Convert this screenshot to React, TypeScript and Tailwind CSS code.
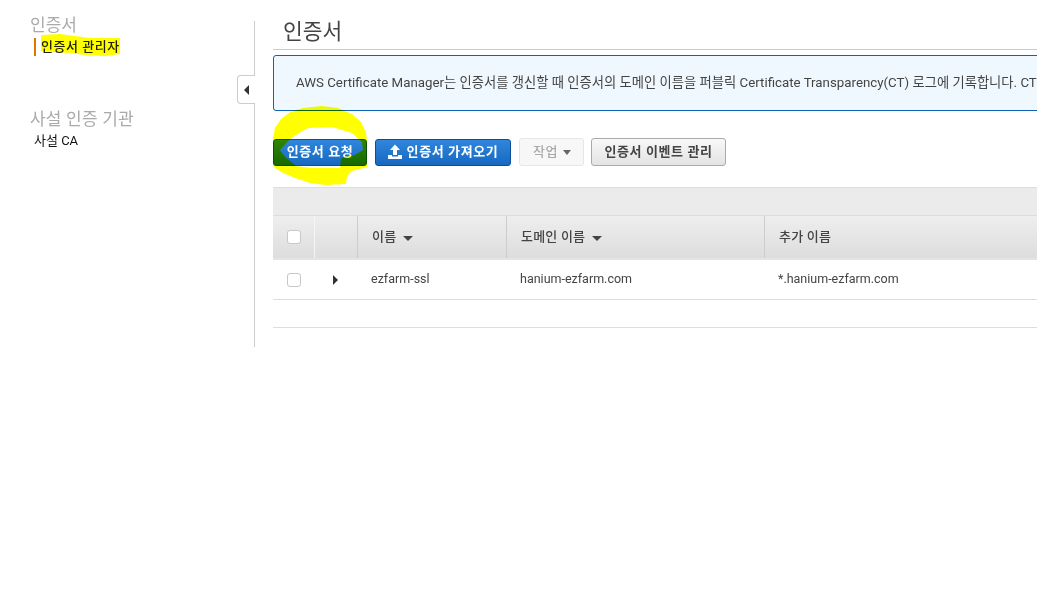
const font = 'font-["Roboto","Noto_Sans_CJK_KR",sans-serif]';

function Caret({ className }: { className: string }) {
  return <span className={`inline-block border-x-[4px] border-t-[5px] border-x-transparent ${className}`} />;
}

function Checkbox() {
  return <span className="block h-[14px] w-[14px] rounded-[3px] border border-[#c8c8c8] bg-white" />;
}

function UploadIcon() {
  return (
    <svg width="14" height="16" viewBox="0 0 14 16" fill="#fff">
      <path d="M7 0.5 12 6H9v5H5V6H2z" />
      <path d="M0 11h4v1.5h6V11h4v4H0z" />
    </svg>
  );
}

function HeaderCell({ label, width, sort }: { label: string; width: string; sort?: boolean }) {
  return (
    <div className={`flex items-center gap-[7px] border-r border-r-[#ccc] pl-[14px] text-[13px] font-medium tracking-[0.2px] text-[#444] ${width}`}>
      {label}
      {sort && <Caret className="mt-[3px] border-t-[#444] border-x-[5px]" />}
    </div>
  );
}

export default function App() {
  return (
    <div className={`relative flex h-[599px] w-[1037px] overflow-hidden bg-white ${font}`}>
      {/* left nav */}
      <nav className="w-[254px] shrink-0 pl-[30px] pt-[15px]">
        <h3 className="text-[17px] leading-[21px] text-[#aaa]">인증서</h3>
        <div className="ml-[4px] mt-[2px] flex h-[18px] items-center border-l-2 border-l-[#dd7700] pl-[5px] text-[13px] font-medium tracking-[0.55px] text-[#222]">
          인증서 관리자
        </div>
        <h3 className="mt-[53px] text-[17px] leading-[21px] tracking-[0.2px] text-[#aaa]">사설 인증 기관</h3>
        <div className="ml-[4px] mt-[2px] text-[13px] leading-[18px] text-[#111]">사설 CA</div>
      </nav>

      {/* divider + collapse toggle */}
      <div className="relative mt-[21px] h-[326px] w-px shrink-0 bg-[#ccc]">
        <button className="absolute right-0 top-[54px] flex h-[29px] w-[18px] items-center justify-center rounded-l-[4px] border border-r-0 border-[#ccc] bg-white">
          <span className="block border-y-[5px] border-r-[5px] border-y-transparent border-r-[#333]" />
        </button>
      </div>

      <main className="ml-[18px] w-[900px] shrink-0">
        <h1 className="mt-[19px] h-[30px] pl-[10px] text-[21.5px] leading-[26px] text-[#444]">인증서</h1>
        <div className="h-px bg-[#ccc]" />

        <div className="mt-[5px] flex h-[56px] items-center rounded-[3px] border border-[#0f62b5] bg-[#f0f8ff] pl-[22px] text-[13.3px] whitespace-nowrap text-[#444]">
          AWS Certificate Manager는 인증서를 갱신할 때 인증서의 도메인 이름을 퍼블릭 Certificate Transparency(CT) 로그에 기록합니다. CT
        </div>

        {/* action buttons */}
        <div className="mt-[27px] flex items-center">
          <button className="h-[27px] w-[94px] rounded-[3px] border border-[#0b4f9a] bg-gradient-to-b from-[#2f86dc] to-[#1769c0] text-[13px] font-bold tracking-[0.6px] text-white">
            인증서 요청
          </button>
          <button className="ml-[8px] flex h-[27px] w-[136px] items-center justify-center gap-[5px] rounded-[3px] border border-[#0b4f9a] bg-gradient-to-b from-[#2f86dc] to-[#1769c0] text-[13px] font-bold tracking-[0.6px] text-white">
            <UploadIcon />
            인증서 가져오기
          </button>
          <button className="ml-[8px] flex h-[28px] w-[65px] items-center justify-center gap-[5px] rounded-[3px] border border-[#e6e6e6] bg-[#f7f7f7] pl-[1px] text-[13px] font-medium tracking-[0.6px] text-[#aaa]">
            작업
            <Caret className="border-t-[#666]" />
          </button>
          <button className="ml-[7px] h-[28px] w-[135px] rounded-[3px] border border-[#aaa] bg-gradient-to-b from-[#f8f8f8] to-[#e3e3e3] text-[13px] font-bold tracking-[0.6px] text-[#444]">
            인증서 이벤트 관리
          </button>
        </div>

        {/* table */}
        <div className="mt-[21px]">
          <div className="h-[29px] border-y border-[#ddd] bg-[#ebebeb]" />
          <div className="flex h-[44px] border-b-2 border-b-[#e4e4e4] bg-gradient-to-b from-[#eeeeee] to-[#dddddd]">
            <div className="flex w-[42px] items-center border-r border-r-[#f5f5f5] pl-[14px]">
              <Checkbox />
            </div>
            <div className="w-[43px] border-r border-r-[#ccc]" />
            <HeaderCell label="이름" width="w-[149px]" sort />
            <HeaderCell label="도메인 이름" width="w-[258px]" sort />
            <HeaderCell label="추가 이름" width="w-[300px]" />
          </div>
          <div className="flex h-[40px] items-center border-b border-b-[#ddd] text-[12.5px] text-[#444]">
            <div className="w-[42px] pl-[14px]">
              <Checkbox />
            </div>
            <div className="flex w-[43px] justify-center pr-[3px]">
              <span className="mt-[1px] block border-y-[5px] border-l-[5px] border-y-transparent border-l-[#333]" />
            </div>
            <div className="w-[149px] pl-[13px]">ezfarm-ssl</div>
            <div className="w-[258px] pl-[13px]">hanium-ezfarm.com</div>
            <div className="pl-[13px]">*.hanium-ezfarm.com</div>
          </div>
          <div className="h-[28px] border-b border-b-[#ddd]" />
        </div>
      </main>

      {/* yellow marker drawn over the page */}
      <svg className="pointer-events-none absolute left-0 top-0 mix-blend-multiply" width="1037" height="599" viewBox="0 0 1037 599">
        <path
          fill="#ffff00"
          fillRule="evenodd"
          d="M273 138 275 128 281 119 290 112 303 108 322 106 338 108 352 114 361 122 366 132 367 142 367 167 352 171 347 176 346 184 325 185 310 183 295 178 281 172 273 166Z
             M280 150 288 141 294 136 308 128 332 127 352 133 362 142 363 150 355 155 341 158 340 168 312 168 296 166 285 157Z"
        />
        <path fill="#ffff00" d="M41 35 60 34 75 36 90 38 120 38 120 54 105 56 85 55 70 53 41 51Z" />
      </svg>
    </div>
  );
}
